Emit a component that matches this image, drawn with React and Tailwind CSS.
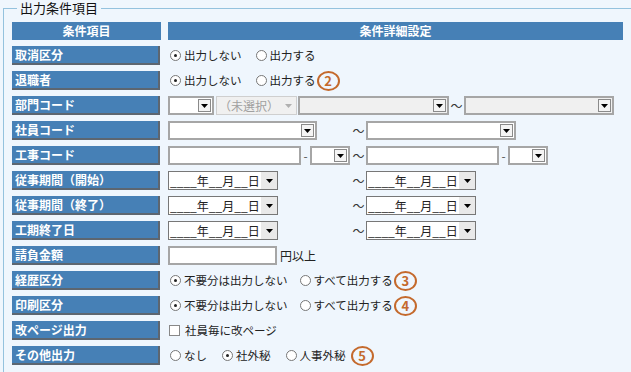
const font = { fontFamily: '"Noto Sans CJK JP", "Noto Sans", sans-serif' };

function Arrow({ light }) {
  return (
    <svg width="7" height="4" viewBox="0 0 7 4">
      <polygon points="0,0 7,0 3.5,4" fill={light ? '#b0b0b0' : '#000'} />
    </svg>
  );
}

function Select({ w, gray }) {
  return (
    <div
      className={`flex h-[19px] items-stretch border-2 border-[#a6a6a6] ${gray ? 'bg-[#f0f0f0]' : 'bg-white'}`}
      style={{ width: w }}
    >
      <div className="flex-1" />
      <div className="my-[1px] mr-[1px] flex w-[13px] items-center justify-center border border-[#8a8a8a] bg-[#f4f4f4]">
        <Arrow />
      </div>
    </div>
  );
}

function Input({ w }) {
  return <div className="h-[19px] border-2 border-[#a6a6a6] bg-white" style={{ width: w }} />;
}

function DateSelect() {
  return (
    <div className="flex h-[19px] w-[110px] items-stretch border border-[#777] bg-white">
      <span className="flex-1 pl-[1px] text-[12px] leading-[17px] text-[#222]">____年__月__日</span>
      <div className="flex w-[16px] items-center justify-center bg-[#e9e9e9]">
        <Arrow />
      </div>
    </div>
  );
}

function Radio({ checked, label }) {
  return (
    <span className="flex items-center gap-[3px] text-[11.5px] text-[#222]">
      <span className="flex h-[11px] w-[11px] items-center justify-center rounded-full border border-[#777] bg-white">
        {checked && <span className="h-[3px] w-[3px] rounded-full bg-[#222]" />}
      </span>
      {label}
    </span>
  );
}

function Mark({ n }) {
  return (
    <span className="flex h-[20px] w-[23px] items-center justify-center rounded-[50%] border-2 border-[#c4692c] text-[13px] font-bold text-[#c4692c]">
      {n}
    </span>
  );
}

function Tilde() {
  return <span className="w-[15px] text-center text-[12px] text-[#333]">～</span>;
}

function Row({ label, children }) {
  return (
    <div className="flex h-[19px] items-center gap-[8px]">
      <div className="flex h-[19px] w-[148px] items-center border-b-2 border-r-2 border-[#5d6670] bg-[#4680b6] pl-[3px] text-[12px] font-bold text-white">
        {label}
      </div>
      <div className="flex items-center">{children}</div>
    </div>
  );
}

export default function App() {
  return (
    <div className="h-[372px] w-[631px] overflow-hidden bg-[#eff6fd] pt-[1px]" style={font}>
      <fieldset className="ml-[3px] w-[650px] border border-[#94c2de] pb-4 pl-[8px] pt-[7px]">
        <legend className="ml-[5px] px-[3px] text-[13px] leading-[14px] text-[#111]">出力条件項目</legend>

        <div className="flex flex-col gap-[6px]">
          {/* header */}
          <div className="flex h-[18px] gap-[7px]">
            <div className="flex w-[149px] items-center justify-center bg-[#4680b6] text-[12px] font-bold text-white">条件項目</div>
            <div className="flex w-[455px] items-center justify-center bg-[#4680b6] text-[12px] font-bold text-white">条件詳細設定</div>
          </div>

          <Row label="取消区分">
            <div className="flex gap-[14px] pl-[2px]">
              <Radio checked label="出力しない" />
              <Radio label="出力する" />
            </div>
          </Row>

          <Row label="退職者">
            <div className="flex items-center gap-[14px] pl-[2px]">
              <Radio checked label="出力しない" />
              <div className="flex items-center gap-[1px]">
                <Radio label="出力する" />
                <Mark n="2" />
              </div>
            </div>
          </Row>

          <Row label="部門コード">
            <Select w={46} />
            <div className="ml-[2px] flex h-[19px] w-[81px] items-center border border-[#cfcfcf] bg-[#f0f0f0] pl-[2px] text-[12px] text-[#a0a0a0]">
              <span className="flex-1">（未選択）</span>
              <span className="pr-[4px]"><Arrow light /></span>
            </div>
            <div className="ml-[1px]"><Select w={151} gray /></div>
            <Tilde />
            <Select w={150} gray />
          </Row>

          <Row label="社員コード">
            <div className="w-[183px]"><Select w={149} /></div>
            <Tilde />
            <Select w={150} />
          </Row>

          <Row label="工事コード">
            <div className="flex w-[183px] items-center">
              <Input w={133} />
              <span className="w-[9px] text-center text-[12px] text-[#555]">-</span>
              <Select w={40} />
            </div>
            <Tilde />
            <Input w={133} />
            <span className="w-[9px] text-center text-[12px] text-[#555]">-</span>
            <Select w={40} />
          </Row>

          {['従事期間（開始）', '従事期間（終了）', '工期終了日'].map((l) => (
            <Row key={l} label={l}>
              <div className="w-[183px]"><DateSelect /></div>
              <Tilde />
              <DateSelect />
            </Row>
          ))}

          <Row label="請負金額">
            <Input w={109} />
            <span className="pl-[3px] text-[12px] text-[#222]">円以上</span>
          </Row>

          <Row label="経歴区分">
            <div className="flex items-center gap-[12px] pl-[2px]">
              <Radio checked label="不要分は出力しない" />
              <div className="flex items-center gap-[1px]">
                <Radio label="すべて出力する" />
                <Mark n="3" />
              </div>
            </div>
          </Row>

          <Row label="印刷区分">
            <div className="flex items-center gap-[12px] pl-[2px]">
              <Radio checked label="不要分は出力しない" />
              <div className="flex items-center gap-[1px]">
                <Radio label="すべて出力する" />
                <Mark n="4" />
              </div>
            </div>
          </Row>

          <Row label="改ページ出力">
            <span className="flex items-center gap-[5px] pl-[1px] text-[11.5px] text-[#222]">
              <span className="h-[11px] w-[11px] border border-[#888] bg-white" />
              社員毎に改ページ
            </span>
          </Row>

          <Row label="その他出力">
            <div className="flex items-center gap-[15px] pl-[2px]">
              <Radio label="なし" />
              <Radio checked label="社外秘" />
              <div className="flex items-center gap-[5px]">
                <Radio label="人事外秘" />
                <Mark n="5" />
              </div>
            </div>
          </Row>
        </div>
      </fieldset>
    </div>
  );
}
